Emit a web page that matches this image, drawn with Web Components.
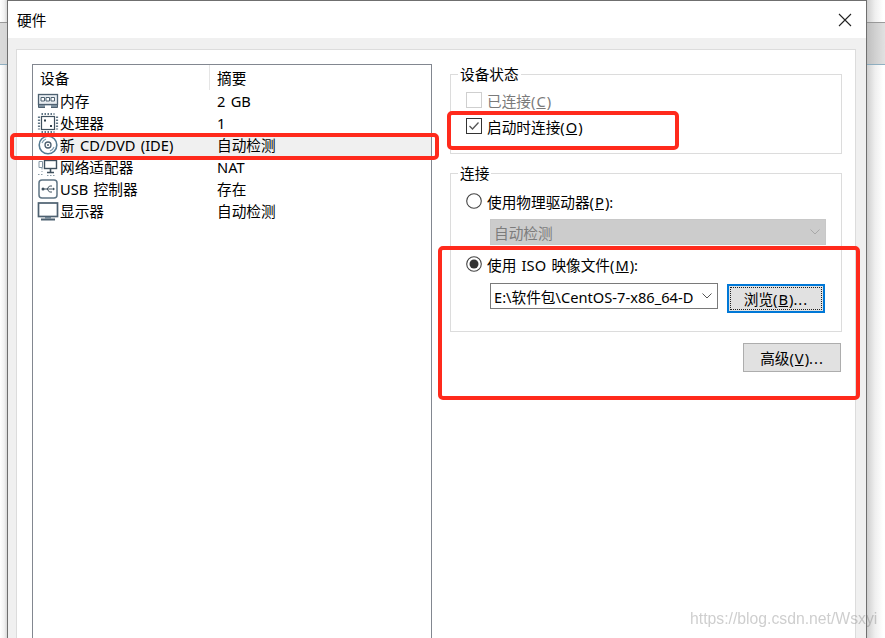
<!DOCTYPE html>
<html lang="zh">
<head>
<meta charset="utf-8">
<title>硬件</title>
<style>
html, body { margin: 0; padding: 0; height: 100%; overflow: hidden; background: #fff; }
body { font: 14.67px "Noto Sans", "Noto Sans CJK SC", sans-serif; color: #000; word-spacing: 1.5px; }
u { margin: 0 1px; }
.ell { letter-spacing: 1px; }
</style>
</head>
<body>
<hw-page>
  <hw-dialog heading="硬件">
    <hw-device-list slot="left">
      <hw-device icon="memory" summary="2 GB">内存</hw-device>
      <hw-device icon="cpu" summary="1">处理器</hw-device>
      <hw-device icon="cd" summary="自动检测" selected>新 CD/DVD (IDE)</hw-device>
      <hw-device icon="net" summary="NAT">网络适配器</hw-device>
      <hw-device icon="usb" summary="存在">USB 控制器</hw-device>
      <hw-device icon="display" summary="自动检测">显示器</hw-device>
    </hw-device-list>
    <hw-settings slot="right">
      <hw-group heading="设备状态" class="status">
        <hw-check disabled>已连接(<u>C</u>)</hw-check>
        <hw-check checked>启动时连接(<u>O</u>)</hw-check>
      </hw-group>
      <hw-group heading="连接" class="conn">
        <hw-radio>使用物理驱动器(<u>P</u>):</hw-radio>
        <hw-indent style="margin-top:-1px"><hw-combo disabled style="width:336px">自动检测</hw-combo></hw-indent>
        <hw-radio checked>使用 ISO 映像文件(<u>M</u>):</hw-radio>
        <hw-indent>
          <hw-combo style="width:228px">E:\软件包\CentOS-7-x86_64-D</hw-combo>
          <hw-button focused>浏览(<u>B</u>)<span class="ell">...</span></hw-button>
        </hw-indent>
      </hw-group>
      <hw-actions><hw-button>高级(<u>V</u>)<span class="ell">...</span></hw-button></hw-actions>
    </hw-settings>
  </hw-dialog>
  <hw-mark style="left:10px;top:133px;width:429px;height:27px"></hw-mark>
  <hw-mark style="left:447px;top:111px;width:232px;height:39px"></hw-mark>
  <hw-mark style="left:438px;top:246px;width:422px;height:154px"></hw-mark>
  <hw-watermark>https://blog.csdn.net/Wsxyi</hw-watermark>
</hw-page>

<script>
const ICONS = {
  memory: `<rect x="1.500" y="4.500" width="19" height="10" fill="#e8edf1" stroke="#4d6070" stroke-width="1.300"/>
    <path d="M4 7.500h3.500V11H4zM9 7.500h3.500V11H9zM14 7.500h3.500V11H14z" fill="#fff" stroke="#4d6070"/>
    <path d="M1.500 14.500h19v3h-19z" fill="#7d909f" stroke="#4d6070"/>
    <path d="M8 15.500h6v3H8z" fill="#fff"/>`,
  cpu: `<rect x="4.500" y="4.500" width="13" height="13" fill="#fff" stroke="#3f505e" stroke-width="1.200"/>
    <path d="M2 4.500v13M20 4.500v13M4.500 2h13M4.500 20h13" stroke="#5f7484" stroke-width="2.200" stroke-dasharray="1.500 1.500" fill="none"/>
    <rect x="7" y="7.500" width="2" height="2" fill="#33424e"/><rect x="13" y="13" width="2" height="2" fill="#33424e"/>`,
  cd: `<circle cx="11" cy="11" r="8.800" fill="#fff" stroke="#557a92" stroke-width="1.600"/>
    <circle cx="11" cy="11" r="3" fill="#fff" stroke="#4d6070" stroke-width="1.300"/>
    <circle cx="11" cy="11" r="1" fill="#4d6070"/>
    <path d="M5 9a6.500 6.500 0 0 1 4-4M17 13a6.500 6.500 0 0 1-4 4" stroke="#7f9cae" stroke-width="1.200" fill="none"/>`,
  net: `<rect x="7.500" y="4.500" width="12" height="8" fill="#fff" stroke="#3f505e" stroke-width="1.400"/>
    <path d="M13.500 13v3M10 16.500h7" stroke="#3f505e" stroke-width="1.600"/>
    <path d="M2 5.500h3.500v6H2z" fill="none" stroke="#8295a3"/>
    <path d="M1 18.500h6M10 19.500h9M5 12v4" stroke="#8b9ca8" stroke-dasharray="1.500 1.500" fill="none"/>`,
  usb: `<rect x="2" y="2" width="18" height="18" rx="3" fill="#fff" stroke="#5f7484" stroke-width="1.500"/>
    <path d="M6 11h10M10 11l2.500-3H15M10 11l2.500 3H15" stroke="#3f505e" fill="none"/>
    <circle cx="6" cy="11" r="1.500" fill="#3f505e"/>
    <path d="M16 9.500l2 1.500-2 1.500z" fill="#3f505e"/>`,
  display: `<rect x="1.500" y="3" width="19" height="13.500" fill="#fff" stroke="#4d6070" stroke-width="1.700"/>
    <path d="M8 17h6v1.500H8z" fill="#6f8494"/>
    <path d="M4 18.500h14V20.500H4z" fill="#4d6070"/>`
};

// page shell: side strips of the window behind, dialog between them
class HwPage extends HTMLElement {
  constructor() {
    super();
    this.attachShadow({mode: "open"}).innerHTML = `
      <style>
        :host { display: flex; position: relative; width: 885px; height: 638px; overflow: hidden; background: #fff; }
        .l { width: 7px; background: linear-gradient(90deg, #fff, #f2f2f2 60%, #d8d8d8); }
        .r { flex: 1; background: linear-gradient(90deg, #cfcfcf, #efefef 45%, #fff 90%); }
        .band { margin-top: 22px; height: 41px; border-top: 1px solid #8a8a8a; border-bottom: 1px solid #7ea3b8; background: #d4d4d4; opacity: .85; }
        .r .band { background: linear-gradient(90deg, #bdbdbd, #dcdcdc); }
      </style>
      <div class="l"><div class="band"></div></div>
      <slot></slot>
      <div class="r"><div class="band"></div></div>`;
  }
}

class HwDialog extends HTMLElement {
  constructor() {
    super();
    this.attachShadow({mode: "open"}).innerHTML = `
      <style>
        :host { display: flex; flex-direction: column; width: 858px; height: 638px; box-sizing: content-box; background: #f0f0f0;
                border: 1px solid #6f6f6f; border-bottom: 0; flex: none; }
        header { display: flex; align-items: center; justify-content: space-between; height: 37px; background: #fff; padding: 0 14px 0 9px; }
        h1 { font: inherit; margin: 0; }
        .body { flex: 1; margin: 11px 10px 0 8px; background: #fff; border: 1px solid #dcdcdc; border-bottom: 0; padding: 14px 13px 0 15px; display: flex; gap: 18px; min-height: 0; }
        svg { display: block; }
      </style>
      <header>
        <h1>${this.getAttribute("heading")}</h1>
        <svg width="14" height="14" viewBox="0 0 14 14"><path d="M1 1l12 12M13 1L1 13" stroke="#222" stroke-width="1.100" fill="none"/></svg>
      </header>
      <div class="body"><slot name="left"></slot><slot name="right"></slot></div>`;
  }
}

class HwDeviceList extends HTMLElement {
  constructor() {
    super();
    this.attachShadow({mode: "open"}).innerHTML = `
      <style>
        :host { display: block; width: 398px; border: 1px solid #828790; border-bottom: 0; background: #fff; flex: none; height: 600px; }
        .head { display: grid; grid-template-columns: 177px 1fr; height: 25px; line-height: 26px; }
        .head div:first-child { padding-left: 7px; border-right: 1px solid #e5e5e5; height: 25px; }
        .head div:last-child { padding-left: 7px; }
      </style>
      <div class="head"><div>设备</div><div>摘要</div></div>
      <slot></slot>`;
  }
}

class HwDevice extends HTMLElement {
  constructor() {
    super();
    const sel = this.hasAttribute("selected");
    this.attachShadow({mode: "open"}).innerHTML = `
      <style>
        :host { display: grid; grid-template-columns: 178px 1fr; height: 22px; line-height: 22px; }
        .name { display: flex; align-items: center; padding-left: 4px; }
        svg { flex: none; margin-right: 1px; }
        .name span, .sum { background: ${sel ? "#f0f0f0" : "transparent"}; }
        .name span { flex: 1; white-space: nowrap; }
        .sum { padding-left: 6px; }
      </style>
      <div class="name">
        <svg width="22" height="22" viewBox="0 0 22 22">${ICONS[this.getAttribute("icon")]}</svg>
        <span><slot></slot></span>
      </div>
      <div class="sum">${this.getAttribute("summary")}</div>`;
  }
}

class HwSettings extends HTMLElement {
  constructor() {
    super();
    this.attachShadow({mode: "open"}).innerHTML = `
      <style>:host { display: flex; flex-direction: column; width: 392px; flex: none; gap: 9px; }</style>
      <slot></slot>`;
  }
}

class HwGroup extends HTMLElement {
  constructor() {
    super();
    const cls = this.className;
    this.attachShadow({mode: "open"}).innerHTML = `
      <style>
        :host { display: block; }
        fieldset { margin: 0; border: 1px solid #dcdcdc; padding: 3px 15px 14px; display: flex; flex-direction: column; min-width: 0; }
        fieldset.conn { padding: 5px 15px 18px; gap: 6px; }
        legend { padding: 0 2px; margin-left: -8px; line-height: 20px; }
      </style>
      <fieldset class="${cls}"><legend>${this.getAttribute("heading")}</legend><slot></slot></fieldset>`;
  }
}

class HwCheck extends HTMLElement {
  constructor() {
    super();
    const off = this.hasAttribute("disabled");
    const on = this.hasAttribute("checked");
    this.attachShadow({mode: "open"}).innerHTML = `
      <style>
        :host { display: flex; align-items: center; gap: 5px; height: 26px; color: ${off ? "#7a7a7a" : "inherit"}; }
        .box { width: 14px; height: 14px; border: 1px solid ${off ? "#cfcfcf" : "#333"}; background: #fff; flex: none; }
        svg { display: block; }
      </style>
      <div class="box">${on ? `<svg width="14" height="14" viewBox="0 0 14 14"><path d="M2.500 7l3 3 6-6.500" stroke="#555" stroke-width="1.300" fill="none"/></svg>` : ""}</div>
      <span><slot></slot></span>`;
  }
}

class HwRadio extends HTMLElement {
  constructor() {
    super();
    const on = this.hasAttribute("checked");
    this.attachShadow({mode: "open"}).innerHTML = `
      <style>
        :host { display: flex; align-items: center; gap: 5px; height: 26px; }
        svg { flex: none; }
      </style>
      <svg width="16" height="16" viewBox="0 0 16 16">
        <circle cx="8" cy="8" r="7.300" fill="#fff" stroke="#444" stroke-width="1.100"/>
        ${on ? `<circle cx="8" cy="8" r="4.500" fill="#333"/>` : ""}
      </svg>
      <span><slot></slot></span>`;
  }
}

class HwIndent extends HTMLElement {
  constructor() {
    super();
    this.attachShadow({mode: "open"}).innerHTML = `
      <style>:host { display: flex; gap: 9px; padding-left: 24px; align-items: flex-start; }</style>
      <slot></slot>`;
  }
}

class HwCombo extends HTMLElement {
  constructor() {
    super();
    const off = this.hasAttribute("disabled");
    this.attachShadow({mode: "open"}).innerHTML = `
      <style>
        :host { display: flex; align-items: center; justify-content: space-between; box-sizing: border-box; height: 26px; flex: none;
                padding: 0 4px 0 3px; white-space: nowrap; overflow: hidden;
                border: 1px solid ${off ? "#c8c8c8" : "#7a7a7a"}; background: ${off ? "#cccccc" : "#fff"}; color: ${off ? "#7c7c7c" : "inherit"}; }
        svg { flex: none; margin-right: 1px; }
      </style>
      <span><slot></slot></span>
      <svg width="10" height="6" viewBox="0 0 10 6"><path d="M.5.5L5 5l4.500-4.500" stroke="${off ? "#a8a8a8" : "#555"}" fill="none"/></svg>`;
  }
}

class HwButton extends HTMLElement {
  constructor() {
    super();
    const foc = this.hasAttribute("focused");
    this.attachShadow({mode: "open"}).innerHTML = `
      <style>
        :host { display: flex; align-items: center; justify-content: center; position: relative; box-sizing: border-box; width: 98px; height: 29px; flex: none;
                margin-top: ${foc ? 1 : 0}px; background: #e1e1e1; border: ${foc ? "2px solid #0078d7" : "1px solid #adadad"}; }
        .dots { position: absolute; inset: 1px; border: 1px dotted #222; display: ${foc ? "block" : "none"}; }
      </style>
      <div class="dots"></div>
      <span><slot></slot></span>`;
  }
}

class HwActions extends HTMLElement {
  constructor() {
    super();
    this.attachShadow({mode: "open"}).innerHTML = `
      <style>:host { display: flex; justify-content: flex-end; padding-right: 1px; margin-top: 2px; }</style>
      <slot></slot>`;
  }
}

// red annotation drawn over the screenshot
class HwMark extends HTMLElement {
  constructor() {
    super();
    this.attachShadow({mode: "open"}).innerHTML = `
      <style>:host { display: block; position: absolute; box-sizing: border-box; border: 4px solid #ff2a1c; border-radius: 5px; }</style>`;
  }
}

class HwWatermark extends HTMLElement {
  constructor() {
    super();
    this.attachShadow({mode: "open"}).innerHTML = `
      <style>:host { position: absolute; left: 690px; top: 609px; font: 15.750px/19px "Liberation Sans", sans-serif; word-spacing: 0; color: rgba(110,110,110,.34); white-space: nowrap; filter: blur(.4px); }</style>
      <slot></slot>`;
  }
}

customElements.define("hw-page", HwPage);
customElements.define("hw-dialog", HwDialog);
customElements.define("hw-device-list", HwDeviceList);
customElements.define("hw-device", HwDevice);
customElements.define("hw-settings", HwSettings);
customElements.define("hw-group", HwGroup);
customElements.define("hw-check", HwCheck);
customElements.define("hw-radio", HwRadio);
customElements.define("hw-indent", HwIndent);
customElements.define("hw-combo", HwCombo);
customElements.define("hw-button", HwButton);
customElements.define("hw-actions", HwActions);
customElements.define("hw-mark", HwMark);
customElements.define("hw-watermark", HwWatermark);
</script>
</body>
</html>
